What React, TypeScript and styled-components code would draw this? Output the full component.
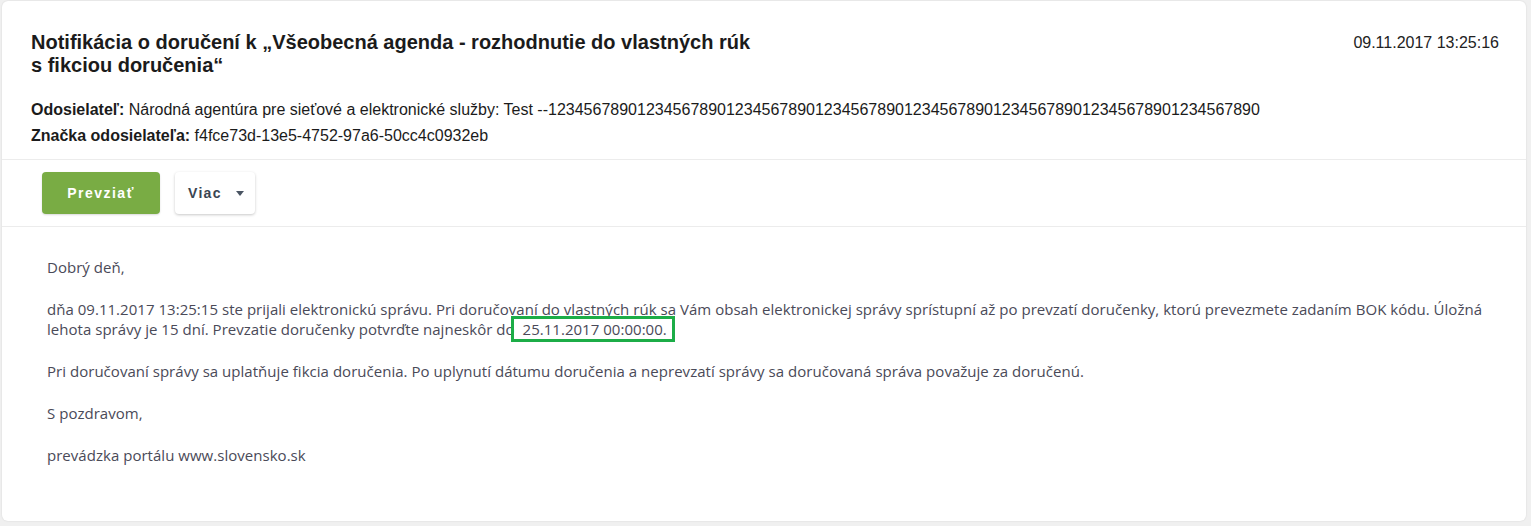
import React from "react";
import styled, { createGlobalStyle } from "styled-components";

const Global = createGlobalStyle`
  html, body { margin: 0; padding: 0; background: #f0f0f0; }
  #root { padding: 1px 5px 3px 2px; }
`;

const Card = styled.div`
  background: #fff;
  border-radius: 6px;
  box-shadow: 0 0 2px rgba(0, 0, 0, 0.12);
  font-family: "Liberation Sans", Arial, sans-serif;
`;

const Header = styled.div`
  padding: 30px 27px 10px 29px;
  border-bottom: 1px solid #ececec;
`;

const TitleRow = styled.div`
  display: flex;
  justify-content: space-between;
  align-items: flex-start;
`;

const Title = styled.h1`
  margin: 0;
  max-width: 726px;
  font-size: 20px;
  line-height: 23px;
  font-weight: bold;
  color: #1b1b1b;
`;

const DateText = styled.div`
  font-size: 16px;
  line-height: 23px;
  color: #222;
`;

const Meta = styled.div`
  margin-top: 20px;
`;

const MetaLine = styled.div`
  font-size: 16px;
  line-height: 26px;
  color: #1b1b1b;
  white-space: nowrap;
`;

const MetaLabel = styled.b`
  font-weight: bold;
`;

const Toolbar = styled.div`
  display: flex;
  gap: 15px;
  padding: 12px 40px 12px;
  border-bottom: 1px solid #ececec;
`;

const Button = styled.button<{ $primary?: boolean }>`
  height: 42px;
  border: none;
  border-radius: 4px;
  font-family: "Liberation Sans", Arial, sans-serif;
  font-size: 14px;
  font-weight: bold;
  display: flex;
  align-items: center;
  cursor: pointer;
  ${(p) =>
    p.$primary
      ? `background: #79ac44; color: #fff; width: 118px; justify-content: center; letter-spacing: 1.5px; box-shadow: 0 1px 2px rgba(0,0,0,0.15);`
      : `background: #fff; color: #3a4552; width: 80px; padding: 0 0 0 13px; gap: 14px; letter-spacing: 1.3px; box-shadow: 0 1px 3px rgba(0,0,0,0.22);`}
`;

const Caret = styled.span`
  width: 0;
  height: 0;
  border-left: 4px solid transparent;
  border-right: 4px solid transparent;
  border-top: 5px solid #4a5563;
`;

const Body = styled.div`
  padding: 30px 30px 56px 45px;
  font-family: "Open Sans", sans-serif;
  font-size: 15px;
  line-height: 20px;
  color: #4a4a58;
  letter-spacing: 0.03px;
`;

const Para = styled.p`
  margin: 0 0 22px;
  &:last-child { margin-bottom: 0; }
`;

const Highlight = styled.span`
  outline: 3px solid #1cad47;
  outline-offset: -1px;
  padding: 1px 6px 1px 10px;
  margin-left: -6px;
`;

export default function App() {
  return (
    <>
      <Global />
      <Card>
        <Header>
          <TitleRow>
            <Title>
              Notifikácia o doručení k „Všeobecná agenda - rozhodnutie do vlastných rúk s fikciou doručenia“
            </Title>
            <DateText>09.11.2017 13:25:16</DateText>
          </TitleRow>
          <Meta>
            <MetaLine>
              <MetaLabel>Odosielateľ:</MetaLabel> Národná agentúra pre sieťové a elektronické služby: Test
              --12345678901234567890123456789012345678901234567890123456789012345678901234567890
            </MetaLine>
            <MetaLine>
              <MetaLabel>Značka odosielateľa:</MetaLabel> f4fce73d-13e5-4752-97a6-50cc4c0932eb
            </MetaLine>
          </Meta>
        </Header>
        <Toolbar>
          <Button $primary>Prevziať</Button>
          <Button>
            Viac
            <Caret />
          </Button>
        </Toolbar>
        <Body>
          <Para>Dobrý deň,</Para>
          <Para>
            dňa 09.11.2017 13:25:15 ste prijali elektronickú správu. Pri doručovaní do vlastných rúk sa Vám obsah
            elektronickej správy sprístupní až po prevzatí doručenky, ktorú prevezmete zadaním BOK kódu. Úložná lehota
            správy je 15 dní. Prevzatie doručenky potvrďte najneskôr do <Highlight>25.11.2017 00:00:00.</Highlight>
          </Para>
          <Para>
            Pri doručovaní správy sa uplatňuje fikcia doručenia. Po uplynutí dátumu doručenia a neprevzatí správy sa
            doručovaná správa považuje za doručenú.
          </Para>
          <Para>S pozdravom,</Para>
          <Para>prevádzka portálu www.slovensko.sk</Para>
        </Body>
      </Card>
    </>
  );
}
